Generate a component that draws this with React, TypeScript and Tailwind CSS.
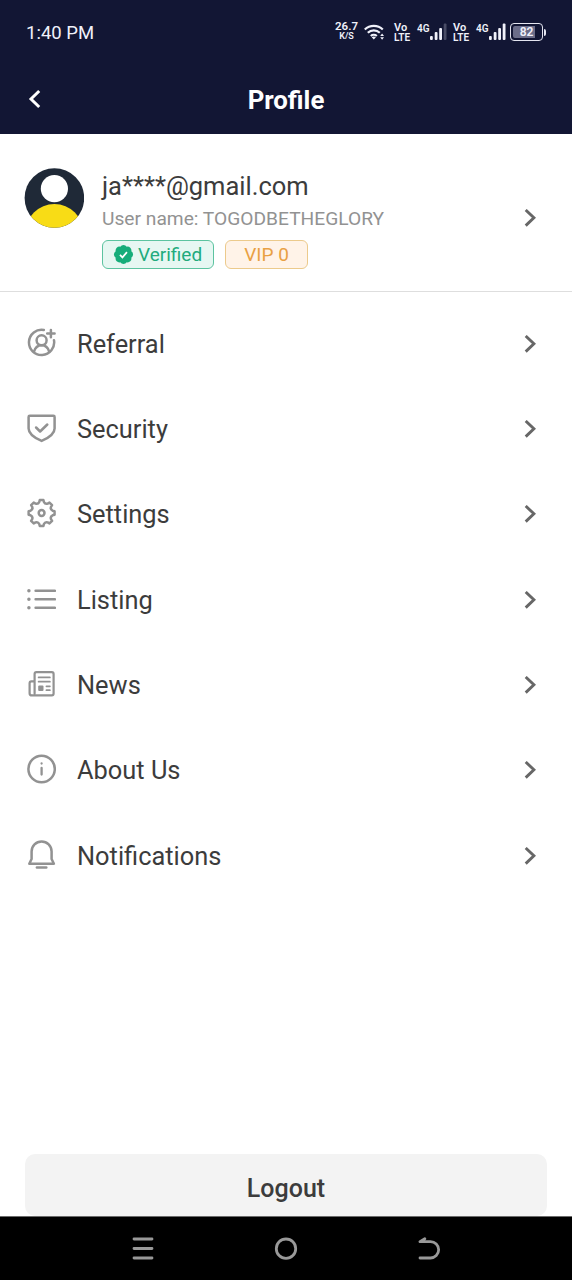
import type { ReactNode } from 'react';
import { clsx } from 'clsx';

interface MenuItem {
  label: string;
  icon: ReactNode;
}

// Outline of a cog with eight teeth around (15, 15)
const getGearPath = () => {
  const point = (radius: number, degrees: number) => {
    const angle = (degrees * Math.PI) / 180;
    return `${(15 + radius * Math.cos(angle)).toFixed(2)} ${(15 + radius * Math.sin(angle)).toFixed(2)}`;
  };
  let path = `M${point(13.1, -8)}`;
  for (let i = 0; i < 8; i++) {
    const a = i * 45;
    path += `L${point(13.1, a + 8)}L${point(11.2, a + 12)}Q${point(9.2, a + 22.5)} ${point(11.2, a + 33)}L${point(13.1, a + 37)}`;
  }
  return `${path}Z`;
};

function MenuIcon({ children }: { children: ReactNode }) {
  return (
    <svg
      viewBox="-0.6 0 30 30"
      className="h-[30px] w-[30px] shrink-0"
      fill="none"
      stroke="#929292"
      strokeWidth="2.5"
      strokeLinecap="round"
      strokeLinejoin="round"
    >
      {children}
    </svg>
  );
}

const menuItems: MenuItem[] = [
  {
    label: 'Referral',
    icon: (
      <MenuIcon>
        <path d="M17.2 2A12.6 12.6 0 1 0 27.4 12.300M24.3 1.900v7.400M20.600 5.600H28" />
        <circle cx="15" cy="12.300" r="5" />
        <path d="M7.400 23.700c1.200-4.100 4-6.400 7.600-6.400s6.400 2.300 7.600 6.400" />
      </MenuIcon>
    ),
  },
  {
    label: 'Security',
    icon: (
      <MenuIcon>
        <path d="M3.200 2.700h23.600q1.200 0 1.200 1.200v11.500c0 5.800-6.600 9.700-13 12.500C8.600 25.100 2 21.200 2 15.400V3.900q0-1.200 1.200-1.200z" />
        <path d="m9.500 14.500 4 4 7.200-7" />
      </MenuIcon>
    ),
  },
  {
    label: 'Settings',
    icon: (
      <MenuIcon>
        <path d={getGearPath()} />
        <circle cx="15" cy="15" r="2.900" />
      </MenuIcon>
    ),
  },
  {
    label: 'Listing',
    icon: (
      <MenuIcon>
        <path d="M9 6.700h19.300M9 15.200h19.300M9 23.700h19.300" />
        <path strokeWidth="3.500" d="M2.300 6.700h.01M2.300 15.200h.01M2.300 23.700h.01" />
      </MenuIcon>
    ),
  },
  {
    label: 'News',
    icon: (
      <MenuIcon>
        <path strokeWidth="2.200" d="M8 24.500V5q0-1.800 1.800-1.800h15.400Q27 3.200 27 5v19.600q0 1.800-1.800 1.800H5.200q-2.200 0-2.200-2.200V14.200q0-1.800 1.800-1.800H8" />
        <path strokeWidth="1.700" d="M12 8.400h11.300M12 12.700h11.300M19.800 17.300h3.500M19.800 21.200h3.500" />
        <rect x="11.600" y="16.600" width="5.300" height="5.300" rx="1" fill="#929292" stroke="none" />
      </MenuIcon>
    ),
  },
  {
    label: 'About Us',
    icon: (
      <MenuIcon>
        <circle cx="15" cy="15" r="13.200" />
        <path strokeWidth="2.300" d="M15 14v6.500M15 9.500v.01" />
      </MenuIcon>
    ),
  },
  {
    label: 'Notifications',
    icon: (
      <MenuIcon>
        <path d="M5 19V11.500a10 10 0 0 1 20 0V19l2.300 4.700H2.700z" />
        <path d="M10.300 27.500h9.400" />
      </MenuIcon>
    ),
  },
];

function Chevron({ className }: { className?: string }) {
  return (
    <svg viewBox="0 0 12 18" className={clsx('h-[18px] w-3 shrink-0', className)} fill="none" stroke="#676767" strokeWidth="2.900">
      <path d="m1.700 1 8.200 7.800-8.200 7.800" />
    </svg>
  );
}

function VoLte({ className }: { className?: string }) {
  return (
    <div className={clsx('w-[17px] pt-px text-[11px] leading-[10px] font-semibold', className)}>
      <div>Vo</div>
      <div className="text-[10px]">LTE</div>
    </div>
  );
}

function Signal({ weak = false, className }: { weak?: boolean; className?: string }) {
  return (
    <div className={clsx('flex items-start', className)}>
      <span className="w-[13px] text-[10px] leading-[11px] font-semibold">4G</span>
      <svg viewBox="0 0 17 18" className="h-[18px] w-[17px]" fill="#f0f1fa">
        <rect x="0" y="13" width="2.800" height="4" rx="1" />
        <rect x="4.700" y="9" width="2.800" height="8" rx="1" />
        <rect x="9.200" y="5" width="2.800" height="12" rx="1" />
        <rect x="13.700" y="0.500" width="2.800" height="16.500" rx="1" opacity={weak ? 0.25 : 1} />
      </svg>
    </div>
  );
}

function StatusBar() {
  return (
    <div className="flex h-[64px] items-center pl-[26px] text-[#f0f1fa]">
      <span className="w-[309px] pt-px text-[18.500px] leading-6">1:40 PM</span>
      <div className="-mt-1 w-[23px] text-center text-[11.500px] leading-[12px] font-semibold">
        <div>26.7</div>
        <div className="text-[9px] leading-[9px]">K/S</div>
      </div>
      <svg viewBox="0 0 22 18" className="ml-1.5 h-[18px] w-[22px]" fill="none" stroke="#f0f1fa" strokeWidth="2.200">
        <path d="M.8 6.500a13 13 0 0 1 18 0M3.800 9.800a8.700 8.700 0 0 1 12 0M6.800 13a4.400 4.400 0 0 1 6 0" />
        <path fill="#f0f1fa" stroke="none" d="m7.700 14.200 2.100 2.300 2.100-2.300q-2-1.500-4.200 0zM16.200 13l1.900-2.500L20 13zM16.200 14.300l1.900 2.500 1.900-2.500z" />
      </svg>
      <VoLte className="ml-[8px]" />
      <Signal weak className="ml-[6px]" />
      <VoLte className="ml-[6px]" />
      <Signal className="ml-[6px]" />
      <div className="ml-[4px] flex h-[18px] w-[33px] rounded-[4px] border-[1.500px] border-[#e4e5f0] p-[2px]">
        <div className="flex w-full items-center justify-center rounded-[2px] bg-linear-to-r from-[#6b6d89] from-80% to-transparent to-80% text-[12px] leading-none font-semibold">
          82
        </div>
      </div>
      <div className="ml-px h-[7px] w-[2px] rounded-r-sm bg-[#e4e5f0]" />
    </div>
  );
}

function ProfileCard() {
  return (
    <div className="flex h-[158px] border-b border-[#dedede] pl-6">
      <svg viewBox="0 0 60 60" className="mt-[34px] h-[60px] w-[60px] shrink-0">
        <clipPath id="avatar">
          <circle cx="30.400" cy="30" r="29.800" />
        </clipPath>
        <g clipPath="url(#avatar)">
          <rect width="61" height="60" fill="#1f2937" />
          <circle cx="30.400" cy="20.700" r="13.600" fill="#fff" />
          <circle cx="30.400" cy="65" r="29" fill="#f8dc16" />
        </g>
      </svg>
      <div className="ml-[18px] w-[422px] shrink-0 pt-[37px]">
        <div className="text-[25.500px] leading-[30px] text-[#3c3c3c]">ja****@gmail.com</div>
        <div className="mt-[6px] text-[19.200px] leading-[24px] text-[#929292]">User name: TOGODBETHEGLORY</div>
        <div className="mt-[9px] flex gap-[11px] text-[19px]">
          <div className="flex h-[29px] w-[112px] items-center rounded-md border border-[#5cc3a0] bg-[#e6f7f2] pl-[9px] text-[#22ab7d]">
            <svg viewBox="0 0 24 24" className="-mt-px mr-[3px] h-[23px] w-[23px] shrink-0">
              <path
                fill="#16ad7a"
                d="M3.850 8.620a4 4 0 0 1 4.780-4.770 4 4 0 0 1 6.740 0 4 4 0 0 1 4.780 4.780 4 4 0 0 1 0 6.740 4 4 0 0 1-4.770 4.780 4 4 0 0 1-6.750 0 4 4 0 0 1-4.780-4.770 4 4 0 0 1 0-6.760Z"
              />
              <path d="m8.300 12.300 2.600 2.700 4.700-5.500" fill="none" stroke="#fff" strokeWidth="1.800" />
            </svg>
            <span className="pt-0.5">Verified</span>
          </div>
          <div className="flex h-[29px] w-[83px] items-center justify-center rounded-md border border-[#ecca8c] bg-[#fff3e8] pt-0.5 text-[#e9a043]">
            VIP 0
          </div>
        </div>
      </div>
      <Chevron className="mt-[75px]" />
    </div>
  );
}

function NavigationBar() {
  return (
    <div className="flex h-16 items-center justify-center gap-[119px] border-t border-[#6b6b6b] bg-black">
      <svg viewBox="0 0 24 24" className="h-6 w-6" stroke="#999" strokeWidth="2.800" strokeLinecap="round">
        <path d="M3 2h18M3 11.500h18M3 21h18" />
      </svg>
      <svg viewBox="0 0 24 24" className="h-6 w-6" fill="none" stroke="#999" strokeWidth="2.800">
        <circle cx="12" cy="11.700" r="9.700" />
      </svg>
      <svg viewBox="0 0 24 24" className="h-6 w-6" fill="none" stroke="#999" strokeWidth="2.800" strokeLinecap="round" strokeLinejoin="round">
        <path d="M7.800 1.800 3 4.700h10.500a8.150 8.150 0 0 1 0 16.300H3" />
      </svg>
    </div>
  );
}

export default function App() {
  return (
    <div className="flex h-[1280px] w-[572px] flex-col bg-white font-[Roboto,sans-serif]">
      <header className="h-[134px] bg-[#121634]">
        <StatusBar />
        <div className="flex h-[70px] items-center pl-[28px]">
          <svg viewBox="0 0 13 20" className="h-5 w-[13px]" fill="none" stroke="#fff" strokeWidth="3">
            <path d="M11.200 2 3 10l8.200 8" />
          </svg>
          <h1 className="mt-[3px] w-[490px] text-center text-[25.800px] font-bold text-white">Profile</h1>
        </div>
      </header>

      <ProfileCard />

      <nav className="pt-[9.200px]">
        {menuItems.map((item) => (
          <div key={item.label} className="flex h-[85.300px] items-center pr-9 pl-[26px]">
            <div className="-mt-[2px]">{item.icon}</div>
            <span className="ml-[21px] flex-1 text-[25.400px] text-[#3c3c3c]">{item.label}</span>
            <Chevron />
          </div>
        ))}
      </nav>

      <div className="mt-auto px-[25px]">
        <button className="flex h-[62px] w-full items-center justify-center rounded-[10px] bg-[#f3f3f3] pt-[7px] text-[25px] font-medium text-[#3c3c3c]">
          Logout
        </button>
      </div>
      <NavigationBar />
    </div>
  );
}
